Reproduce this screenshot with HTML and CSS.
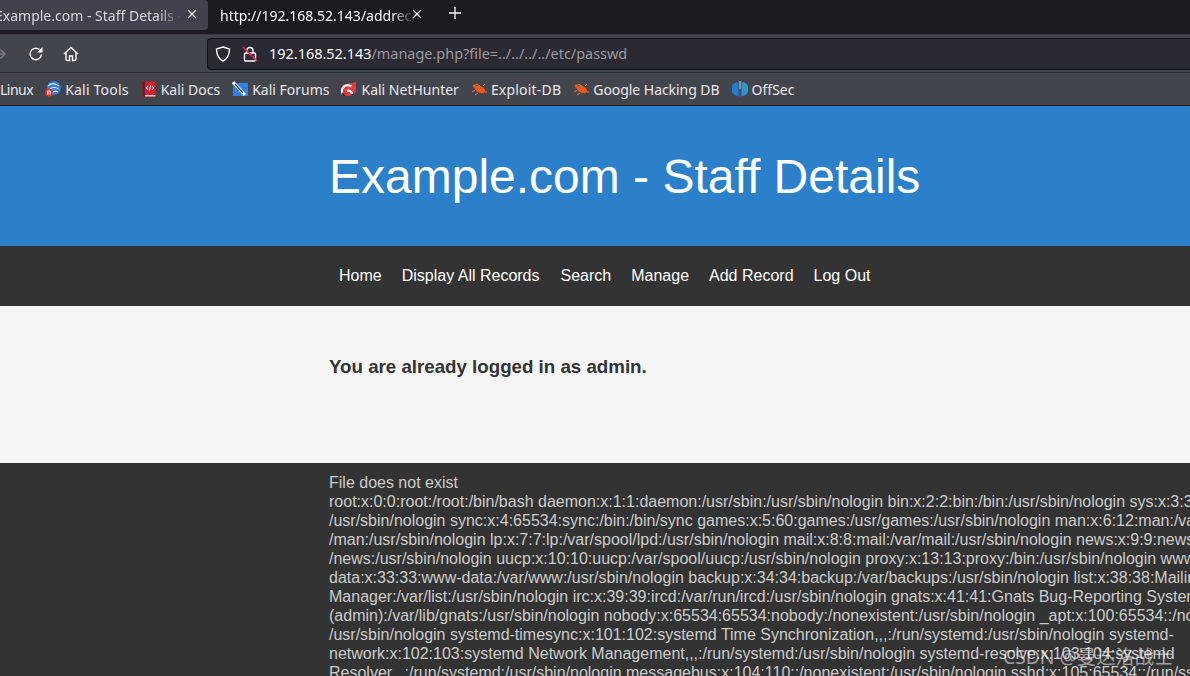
FILE: index.html
```html
<!DOCTYPE html>
<html lang="en">
<head>
<meta charset="utf-8">
<title>Example.com - Staff Details</title>
<link rel="stylesheet" href="styles.css">
</head>
<body>
<div class="browser">
  <div class="tabbar">
    <div class="tab tab-active"><span class="tab-title">Example.com - Staff Details - Mozilla</span><svg class="tab-x" width="10" height="10" viewBox="0 0 10 10"><path d="M1 1l8 8M9 1l-8 8" stroke="#fbfbfe" stroke-width="1.100" fill="none"/></svg></div>
    <div class="tab tab-other"><span class="tab-title">http://192.168.52.143/addrecord.php</span><svg class="tab-x" width="10" height="10" viewBox="0 0 10 10"><path d="M1 1l8 8M9 1l-8 8" stroke="#fbfbfe" stroke-width="1.100" fill="none"/></svg></div>
    <svg class="plus" width="14" height="14" viewBox="0 0 14 14"><path d="M7 1v12M1 7h12" stroke="#fbfbfe" stroke-width="1.300" fill="none"/></svg>
  </div>
  <div class="toolbar">
    <svg class="tool tool-fwd" width="10" height="14" viewBox="0 0 10 14"><path d="M0 7h7M3.500 2.500 8 7l-4.500 4.500" stroke="#7b7c82" stroke-width="1.500" fill="none"/></svg>
    <svg class="tool tool-reload" width="16" height="16" viewBox="0 0 16 16"><path d="M13.500 8.500A5.700 5.700 0 1 1 11.500 3.600" stroke="#fbfbfe" stroke-width="1.400" fill="none"/><path d="M14.500 1v5.500H9z" fill="#fbfbfe"/></svg>
    <svg class="tool tool-home" width="16" height="16" viewBox="0 0 16 16"><path d="M1 8 8 1.500 15 8M3 6.500V13a1.500 1.500 0 0 0 1.500 1.500H6.500V10H9.500V14.500H11.500A1.500 1.500 0 0 0 13 13V6.500" stroke="#fbfbfe" stroke-width="1.400" fill="none"/></svg>
    <div class="urlbar">
      <svg class="shield" width="16" height="16" viewBox="0 0 16 16"><path d="M8 1 14.500 3c0 6-1.500 9.500-6.500 12C3 12.500 1.500 9 1.500 3z" stroke="#fbfbfe" stroke-width="1.400" fill="none"/></svg>
      <svg class="lock" width="16" height="16" viewBox="0 0 16 16"><rect x="2.500" y="7" width="11" height="8" rx="1" fill="none" stroke="#fbfbfe" stroke-width="1.400"/><path d="M5 7V4.500a3 3 0 0 1 6 0V7" fill="none" stroke="#fbfbfe" stroke-width="1.400"/><path d="M1 1l14 14" stroke="#e22850" stroke-width="1.600"/></svg>
      <span class="url"><span class="url-host">192.168.52.143</span>/manage.php?file=../../../../etc/passwd</span>
    </div>
  </div>
  <div class="bookmarks">
    <span class="bm bm-linux">Linux</span>
    <span class="bm bm-wide"><svg width="16" height="16" viewBox="0 0 16 16"><circle cx="8.800" cy="7" r="7" fill="#2f7fe0"/><path d="M3 5q5-4.500 11 0M5 8q4-3 8.500 0M8 11q3-1.500 5 0" stroke="#fff" stroke-width="1.100" fill="none"/><circle cx="4" cy="11.500" r="4" fill="#e0302c"/><path d="M2.500 13.500v-3.500h3v3.500M4 10v3.500" stroke="#fff" stroke-width=".8" fill="none"/></svg>Kali Tools</span>
    <span class="bm"><svg width="16" height="16" viewBox="0 0 16 16"><rect x="1.500" y="0.500" width="13" height="15" fill="#d3202a"/><rect x="1.500" y="0.500" width="2.500" height="15" fill="#5d1a3a"/><rect x="4" y="14" width="10.500" height="1.500" fill="#f3c0c0"/><path d="M7 5 5.500 7 7 9M11 5l1.500 2L11 9M9.500 4.500l-1 5" stroke="#fff" fill="none"/></svg>Kali Docs</span>
    <span class="bm"><svg width="16" height="16" viewBox="0 0 16 16"><rect x="1" y="2" width="15" height="13" fill="#2f80ed"/><path d="M1 1l12 13" stroke="#fff" stroke-width="3"/><path d="M3 3l8 9" stroke="#27303c" stroke-width="1.200"/></svg>Kali Forums</span>
    <span class="bm"><svg width="16" height="16" viewBox="0 0 16 16"><path d="M1 4 15 1v10l-6 4H3z" fill="#e0393e"/><path d="M1.500 13a6 6 0 0 1 9-7.500M11 13a3.500 3.500 0 0 0-5-3" stroke="#fff" stroke-width="2.200" fill="none"/><path d="M1 12l3 3" stroke="#2b2a33" stroke-width="1.500"/></svg>Kali NetHunter</span>
    <span class="bm bm-wide"><svg width="16" height="16" viewBox="0 0 16 16"><ellipse cx="9" cy="8.500" rx="5.500" ry="3.200" transform="rotate(25 9 8.500)" fill="#ea5a1c"/><circle cx="3.500" cy="5" r="1.800" fill="#ea5a1c"/><path d="M5 3 9 5M4 9 1 11M7 12 4 14M12 5l2-2M14 11h2" stroke="#ef7a3e" fill="none"/></svg>Exploit-DB</span>
    <span class="bm bm-tight"><svg width="16" height="16" viewBox="0 0 16 16"><ellipse cx="9" cy="8.500" rx="5.500" ry="3.200" transform="rotate(25 9 8.500)" fill="#ea5a1c"/><circle cx="3.500" cy="5" r="1.800" fill="#ea5a1c"/><path d="M5 3 9 5M4 9 1 11M7 12 4 14M12 5l2-2M14 11h2" stroke="#ef7a3e" fill="none"/></svg>Google Hacking DB</span>
    <span class="bm"><svg width="16" height="16" viewBox="0 0 16 16"><path d="M6.500 1a7 7 0 0 0 0 14z" fill="#1f7fd0"/><path d="M9.500 1a7 7 0 0 1 0 14z" fill="#2b9ac9"/><path d="M7.300 0h1.400v8h-1.400z" fill="#9fb4c8"/><path d="M7.300 8h1.400v8h-1.400z" fill="#5a3fd0"/></svg>OffSec</span>
  </div>
</div>
<header class="site-header"><h1 class="site-title">Example.com - Staff Details</h1></header>
<nav class="site-nav">
  <a class="nav-link">Home</a>
  <a class="nav-link nav-link-wide">Display All Records</a>
  <a class="nav-link">Search</a>
  <a class="nav-link">Manage</a>
  <a class="nav-link">Add Record</a>
  <a class="nav-link">Log Out</a>
</nav>
<main class="content"><h3 class="status">You are already logged in as admin.</h3></main>
<footer class="output">
  <div>File does not exist</div>
  <div>root:x:0:0:root:/root:/bin/bash daemon:x:1:1:daemon:/usr/sbin:/usr/sbin/nologin bin:x:2:2:bin:/bin:/usr/sbin/nologin sys:x:3:3:sys:/dev:</div>
  <div>/usr/sbin/nologin sync:x:4:65534:sync:/bin:/bin/sync games:x:5:60:games:/usr/games:/usr/sbin/nologin man:x:6:12:man:/var/cache</div>
  <div>/man:/usr/sbin/nologin lp:x:7:7:lp:/var/spool/lpd:/usr/sbin/nologin mail:x:8:8:mail:/var/mail:/usr/sbin/nologin news:x:9:9:news:/var/spool</div>
  <div>/news:/usr/sbin/nologin uucp:x:10:10:uucp:/var/spool/uucp:/usr/sbin/nologin proxy:x:13:13:proxy:/bin:/usr/sbin/nologin www-</div>
  <div>data:x:33:33:www-data:/var/www:/usr/sbin/nologin backup:x:34:34:backup:/var/backups:/usr/sbin/nologin list:x:38:38:Mailing List</div>
  <div>Manager:/var/list:/usr/sbin/nologin irc:x:39:39:ircd:/var/run/ircd:/usr/sbin/nologin gnats:x:41:41:Gnats Bug-Reporting System</div>
  <div>(admin):/var/lib/gnats:/usr/sbin/nologin nobody:x:65534:65534:nobody:/nonexistent:/usr/sbin/nologin _apt:x:100:65534::/nonexistent:</div>
  <div>/usr/sbin/nologin systemd-timesync:x:101:102:systemd Time Synchronization,,,:/run/systemd:/usr/sbin/nologin systemd-</div>
  <div>network:x:102:103:systemd Network Management,,,:/run/systemd:/usr/sbin/nologin systemd-resolve:x:103:104:systemd</div>
  <div>Resolver,,,:/run/systemd:/usr/sbin/nologin messagebus:x:104:110::/nonexistent:/usr/sbin/nologin sshd:x:105:65534::/run/sshd:</div>
</footer>
<div class="watermark">CSDN @曼达洛战士</div>
</body>
</html>
```
FILE: styles.css
```css
* { box-sizing: border-box; }
html, body { margin: 0; height: 676px; overflow: hidden; }
body { font-family: "Liberation Sans", Arial, sans-serif; font-size: 16px; background: #333; position: relative; }

.browser { font-family: "Noto Sans", sans-serif; font-size: 14px; color: #fbfbfe; }
.tabbar { height: 34px; background: #1c1b22; display: flex; align-items: flex-start; }
.tab { height: 30px; display: flex; align-items: center; flex: none; overflow: hidden; }
.tab-active { width: 208px; background: #42414d; border-radius: 0 4px 4px 0; }
.tab-other { width: 225px; padding-left: 12px; }
.tab-title { white-space: nowrap; overflow: hidden; flex: none; -webkit-mask-image: linear-gradient(to right, #000 88%, transparent); mask-image: linear-gradient(to right, #000 88%, transparent); }
.tab-active .tab-title { margin-left: -5px; width: 186px; color: #d8d8dc; }
.tab-other .tab-title { width: 195px; }
.tab-x { flex: none; margin-left: -3px; margin-bottom: 3px; }
.tab-active .tab-x { margin-left: 6px; }
.plus { margin: 6px 0 0 15px; }

.toolbar { height: 38px; background: #43454d; display: flex; align-items: center; border-top: 1px solid #3a3a42; }
.tool { flex: none; }
.tool-fwd { margin-left: -3px; }
.tool-reload { margin-left: 21px; }
.tool-home { margin-left: 19px; }
.urlbar { margin-left: 128px; height: 32px; flex: 1; background: #2b2a33; border: 1px solid #14141a; border-right: 0; border-radius: 4px 0 0 4px; display: flex; align-items: center; padding-left: 7px; }
.shield { flex: none; }
.lock { flex: none; margin-left: 11px; }
.url { margin-left: 11px; font-size: 14.450px; color: #9a9aa0; white-space: nowrap; }
.url-host { color: #fbfbfe; }

.bookmarks { height: 34px; background: #43454d; display: flex; align-items: center; border-top: 1px solid #2a2a30; border-bottom: 1px solid #1c1b22; gap: 12px; }
.bm { display: flex; align-items: center; gap: 4px; white-space: nowrap; color: #e8e8ec; }
.bm-linux { letter-spacing: -0.5px; }
.bm-wide { letter-spacing: 0.2px; }
.bm-tight { letter-spacing: -0.05px; }

.site-header { height: 140px; background: #2b80c9; padding: 43px 0 0 329px; }
.site-title { margin: 0; font-weight: 400; font-size: 48px; line-height: 55px; color: #fff; white-space: nowrap; }
.site-nav { height: 60px; background: #333; display: flex; align-items: center; padding-left: 329px; }
.nav-link { color: #fff; padding: 0 10px; white-space: nowrap; }
.nav-link-wide { padding-right: 11px; }
.content { height: 157px; background: #f5f5f5; padding: 50px 0 0 329px; }
.status { margin: 0; font-size: 18.720px; line-height: 22px; color: #333; white-space: nowrap; }
.output { padding: 10px 0 0 329px; color: #ccc; line-height: 19px; white-space: nowrap; height: 213px; overflow: hidden; }
.watermark { position: absolute; left: 1003px; top: 645px; font-size: 19.300px; line-height: 24px; color: rgba(255,255,255,0.55); font-family: "Noto Sans", "Noto Sans CJK SC", sans-serif; white-space: nowrap; }
```
